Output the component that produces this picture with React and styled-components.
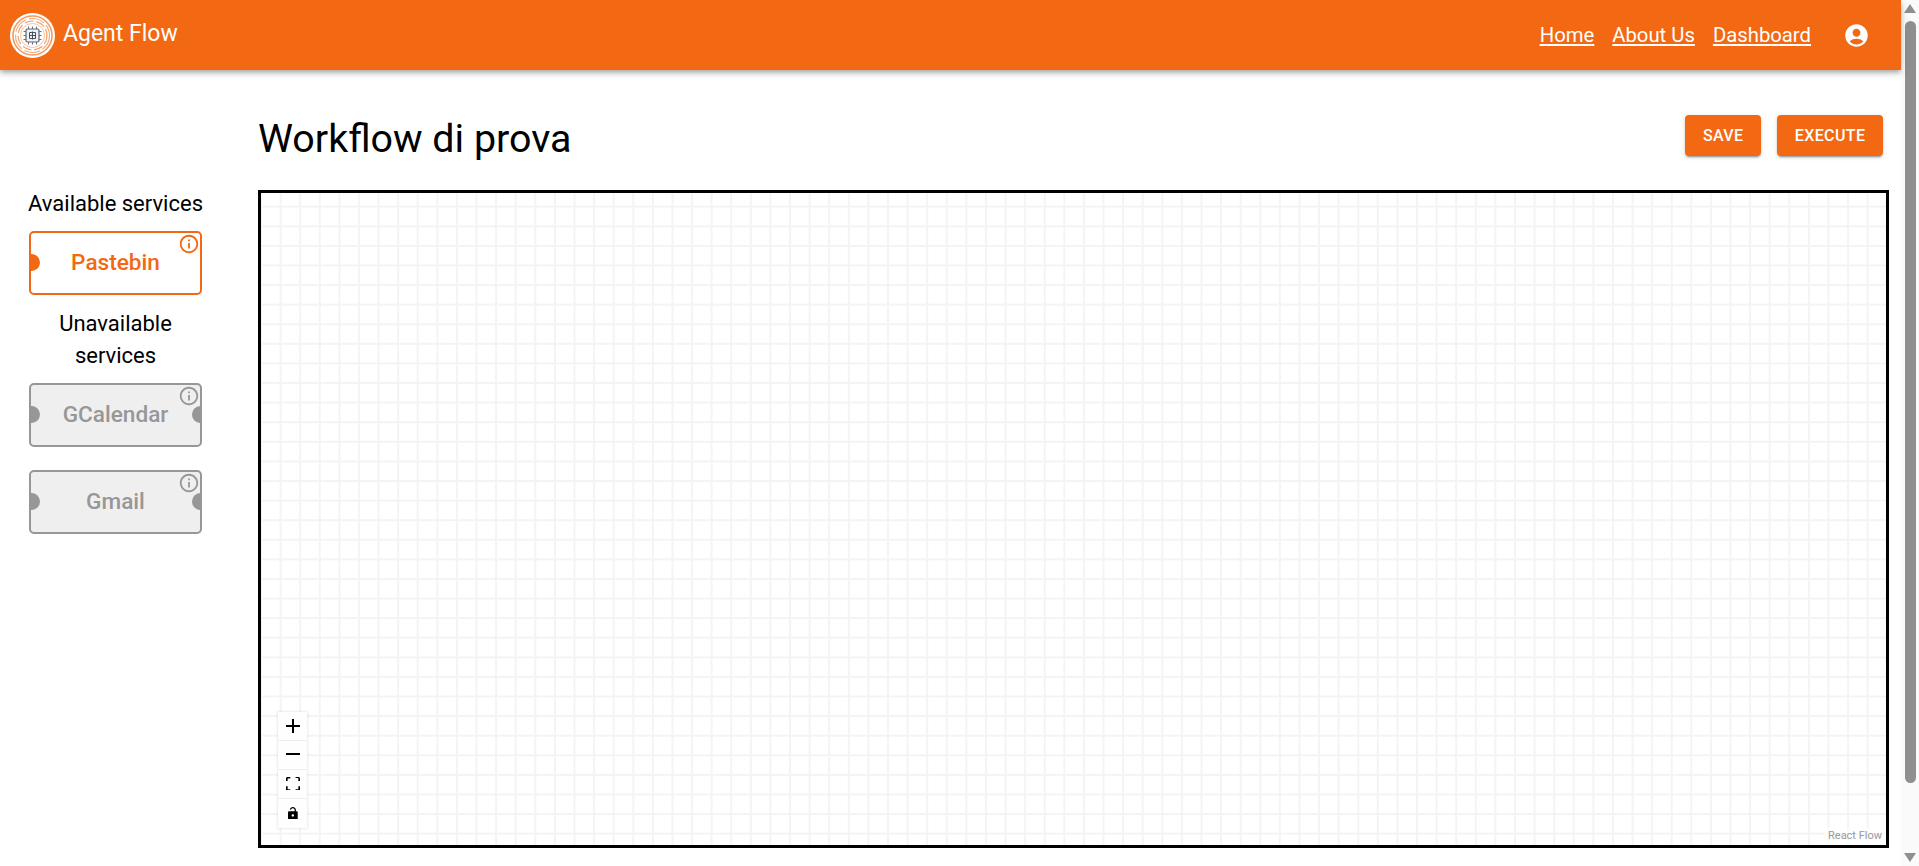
import React from 'react'
import styled, { createGlobalStyle } from 'styled-components'
import { MdAccountCircle, MdInfoOutline } from 'react-icons/md'

const ORANGE = '#f36812'
const GREY = '#979797'

const GlobalStyle = createGlobalStyle`
    body {
        margin: 0;
        font-family: Roboto, "Liberation Sans", sans-serif;
        color: #000;
        background: #fff;
    }
`

function Logo() {
    return (
        <svg width="45" height="45" viewBox="0 0 45 45">
            <circle cx="22.5" cy="22.5" r="22.5" fill="#fff" />
            <circle cx="22.5" cy="22.5" r="19.5" fill="none" stroke="#f39a5f" strokeWidth="1.6" />
            <circle cx="22.5" cy="22.5" r="17" fill="none" stroke="#f6ae7d" strokeWidth="1.2" strokeDasharray="16 3" />
            <circle cx="22.5" cy="22.5" r="14.5" fill="#fff" stroke="#f39f68" strokeWidth="1.2" strokeDasharray="9 3" />
            <circle cx="22.5" cy="22.5" r="12" fill="#fff" stroke="#f8c49f" strokeWidth="1" />
            <rect x="16" y="16" width="13" height="13" rx="1.5" fill="#eef0f3" stroke="#5b6470" strokeWidth="1.2" />
            <path d="M18.5 13.5V16M22.5 13.5V16M26.5 13.5V16M18.5 29v2.5M22.5 29v2.5M26.5 29v2.5M13.5 18.5H16M13.5 22.5H16M13.5 26.5H16M29 18.5h2.5M29 22.5h2.5M29 26.5h2.5" stroke="#67707c" strokeWidth="1" />
            <path d="M19.5 19.5h6v6h-6zM22.5 18.5v8M19.5 22.5h6" fill="none" stroke="#47505b" strokeWidth="1" />
        </svg>
    )
}

function ServiceNode({ name, disabled, left, right }) {
    return (
        <Node $disabled={disabled}>
            {left && <Handle $side="left" $disabled={disabled} />}
            {name}
            <InfoButton $disabled={disabled}><MdInfoOutline /></InfoButton>
            {right && <Handle $side="right" $disabled={disabled} />}
        </Node>
    )
}

export default function App() {
    return (
        <Shell>
            <GlobalStyle />
            <Content>
                <Header>
                    <Brand>
                        <Logo />
                        <BrandName>Agent Flow</BrandName>
                    </Brand>
                    <NavLinks>
                        <NavLink href="#">Home</NavLink>
                        <NavLink href="#">About Us</NavLink>
                        <NavLink href="#">Dashboard</NavLink>
                    </NavLinks>
                    <UserIcon><MdAccountCircle /></UserIcon>
                </Header>
                <Page>
                    <Sidebar>
                        <SideTitle>Available services</SideTitle>
                        <ServiceNode name="Pastebin" left />
                        <SideTitle>Unavailable services</SideTitle>
                        <DisabledList>
                            <ServiceNode name="GCalendar" disabled left right />
                            <ServiceNode name="Gmail" disabled left right />
                        </DisabledList>
                    </Sidebar>
                    <Main>
                        <TitleRow>
                            <Title>Workflow di prova</Title>
                            <Actions>
                                <ActionButton>Save</ActionButton>
                                <ActionButton>Execute</ActionButton>
                            </Actions>
                        </TitleRow>
                        <Canvas>
                            <Controls>
                                <ControlButton>
                                    <svg viewBox="0 0 32 32"><path d="M32 18.3H18.3V32h-4.6V18.3H0v-4.6h13.7V0h4.6v13.7H32" /></svg>
                                </ControlButton>
                                <ControlButton>
                                    <svg viewBox="0 0 32 5"><path d="M0 0h32v4.6H0z" /></svg>
                                </ControlButton>
                                <ControlButton>
                                    <svg viewBox="0 0 32 30"><path d="M3.7 27.2c0 .4.4.8.8.8h5.2v3.7H3.6A3.6 3.6 0 0 1 0 28V21h3.7v6.2zM27.4 2H21.8V0h6.6C30.4 0 32 1.6 32 3.6V9h-3.8V2.8c0-.4-.4-.8-.8-.8zM0 3.6C0 1.6 1.6 0 3.6 0h6.1v3.7H4.5c-.4 0-.8.4-.8.8V9H0V3.6zM28.3 27.2V21H32v7a3.6 3.6 0 0 1-3.6 3.7h-6.6V28h5.7c.4 0 .8-.4.8-.8z" /></svg>
                                </ControlButton>
                                <ControlButton $iconWidth={10}>
                                    <svg viewBox="0 0 25 32"><path d="M21.3 10.7h-1.5V7.6C19.8 3.4 16.3 0 12.1 0 8.5 0 5.2 2.6 4.6 6.1l3 .6c.3-2 2.3-3.6 4.5-3.6 2.5 0 4.6 2.1 4.6 4.6v3H3c-1.7 0-3 1.3-3 3v15.2c0 1.7 1.3 3 3 3h18.3c1.7 0 3-1.3 3-3V13.7c0-1.7-1.3-3-3-3zM12.1 24.4c-1.7 0-3-1.4-3-3s1.3-3 3-3 3 1.3 3 3-1.3 3-3 3z" /></svg>
                                </ControlButton>
                            </Controls>
                            <Attribution>React Flow</Attribution>
                        </Canvas>
                    </Main>
                </Page>
            </Content>
            <ScrollRail>
                <svg width="12" height="9" viewBox="0 0 12 9"><path d="M6 0l6 9H0z" fill="#8f8f8f" /></svg>
                <ScrollThumb />
                <ScrollArrowDown>
                    <svg width="12" height="9" viewBox="0 0 12 9"><path d="M0 0h12L6 9z" fill="#8f8f8f" /></svg>
                </ScrollArrowDown>
            </ScrollRail>
        </Shell>
    )
}

const Shell = styled.div`
    display: flex;
    height: 100vh;
    overflow: hidden;
`

const Content = styled.div`
    flex: 1;
    min-width: 0;
`

const ScrollRail = styled.div`
    box-sizing: border-box;
    display: flex;
    flex-direction: column;
    align-items: center;
    width: 18px;
    flex: none;
    padding: 4px 0;
    background: #fafafa;
`

const ScrollThumb = styled.div`
    width: 11px;
    height: 762px;
    margin-top: 8px;
    border-radius: 6px;
    background: #8f8f8f;
`

const ScrollArrowDown = styled.div`
    display: flex;
    margin-top: auto;
`

const Header = styled.header`
    display: flex;
    align-items: center;
    height: 70px;
    padding: 0 31px 0 10px;
    background: ${ORANGE};
    color: #fff;
    box-shadow: 0 2px 4px -1px rgba(0, 0, 0, .2), 0 4px 5px 0 rgba(0, 0, 0, .14), 0 1px 10px 0 rgba(0, 0, 0, .12);
    position: relative;
`

const Brand = styled.div`
    display: flex;
    align-items: center;
    gap: 8px;
    flex: 1;
`

const BrandName = styled.span`
    font-size: 23px;
    line-height: 32px;
    margin-top: -3px;
`

const NavLinks = styled.nav`
    display: flex;
    gap: 18px;
    margin-top: -1px;
`

const NavLink = styled.a`
    color: #fff;
    font-size: 20.3px;
    line-height: 30px;
    text-decoration: underline;
`

const UserIcon = styled.div`
    display: flex;
    margin-left: 32px;
    font-size: 27px;
`

const Page = styled.div`
    display: flex;
    align-items: flex-start;
    padding: 0 12px 18px 0;
`

const Sidebar = styled.aside`
    display: flex;
    flex-direction: column;
    align-items: center;
    gap: 12px;
    width: 183px;
    margin: 117px 51px 0 24px;
    flex: none;
`

const SideTitle = styled.div`
    font-size: 22px;
    line-height: 32px;
    text-align: center;
    padding-top: 1px;
    margin-bottom: -1px;
`

const DisabledList = styled.div`
    display: flex;
    flex-direction: column;
    gap: 23px;
`

const Node = styled.div`
    box-sizing: border-box;
    position: relative;
    display: flex;
    align-items: center;
    justify-content: center;
    width: 173px;
    height: 64px;
    padding-bottom: 2px;
    overflow: hidden;
    border: 2px solid ${p => (p.$disabled ? GREY : ORANGE)};
    border-radius: 5px;
    background: ${p => (p.$disabled ? '#f0eff0' : '#fff')};
    color: ${p => (p.$disabled ? GREY : ORANGE)};
    font-size: 22.6px;
    font-weight: 500;
`

const Handle = styled.span`
    position: absolute;
    top: 50%;
    ${p => p.$side}: ${p => (p.$side === 'left' ? -8 : -9)}px;
    width: 17px;
    height: 17px;
    margin-top: -9px;
    border-radius: 50%;
    background: ${p => (p.$disabled ? GREY : ORANGE)};
`

const InfoButton = styled.span`
    position: absolute;
    top: 0;
    right: 0;
    display: flex;
    font-size: 22px;
    color: ${p => (p.$disabled ? GREY : ORANGE)};
`

const Main = styled.main`
    flex: 1;
    min-width: 0;
`

const TitleRow = styled.div`
    display: flex;
    justify-content: space-between;
    align-items: flex-start;
    height: 120px;
    box-sizing: border-box;
    padding: 45px 6px 0 0;
`

const Title = styled.h1`
    margin: 0;
    font-size: 39.4px;
    line-height: 48px;
    font-weight: 400;
`

const Actions = styled.div`
    display: flex;
    gap: 16px;
`

const ActionButton = styled.button`
    height: 41px;
    padding: 0 17.6px;
    border: 0;
    border-radius: 4px;
    background: ${ORANGE};
    color: #fff;
    font-family: Roboto, sans-serif;
    font-size: 16px;
    font-weight: 500;
    letter-spacing: .4px;
    text-transform: uppercase;
    box-shadow: 0 3px 1px -2px rgba(0, 0, 0, .2), 0 2px 2px 0 rgba(0, 0, 0, .14), 0 1px 5px 0 rgba(0, 0, 0, .12);
`

const Canvas = styled.div`
    box-sizing: border-box;
    position: relative;
    height: 658px;
    border: 3px solid #000;
    background-color: #fff;
    background-image:
        linear-gradient(to right, #f4f4f4 2px, transparent 2px),
        linear-gradient(to bottom, #f4f4f4 2px, transparent 2px);
    background-size: 19.6px 19.6px;
    background-position: -1px 12.7px;
`

const Controls = styled.div`
    position: absolute;
    left: 17px;
    bottom: 17px;
    box-shadow: 0 0 2px 1px rgba(0, 0, 0, .08);
`

const ControlButton = styled.div`
    box-sizing: border-box;
    display: flex;
    align-items: center;
    justify-content: center;
    width: 29px;
    height: 29px;
    padding-bottom: 1px;
    background: #fefefe;
    border-bottom: 1px solid #eee;

    &:last-child {
        border-bottom: 0;
    }

    & > svg {
        width: ${p => p.$iconWidth || 14}px;
        max-height: 14px;
    }
`

const Attribution = styled.div`
    position: absolute;
    right: 0;
    bottom: 0;
    padding: 2px 4px 3px;
    background: rgba(255, 255, 255, .5);
    color: #999;
    font-size: 11px;
    line-height: 12px;
`
